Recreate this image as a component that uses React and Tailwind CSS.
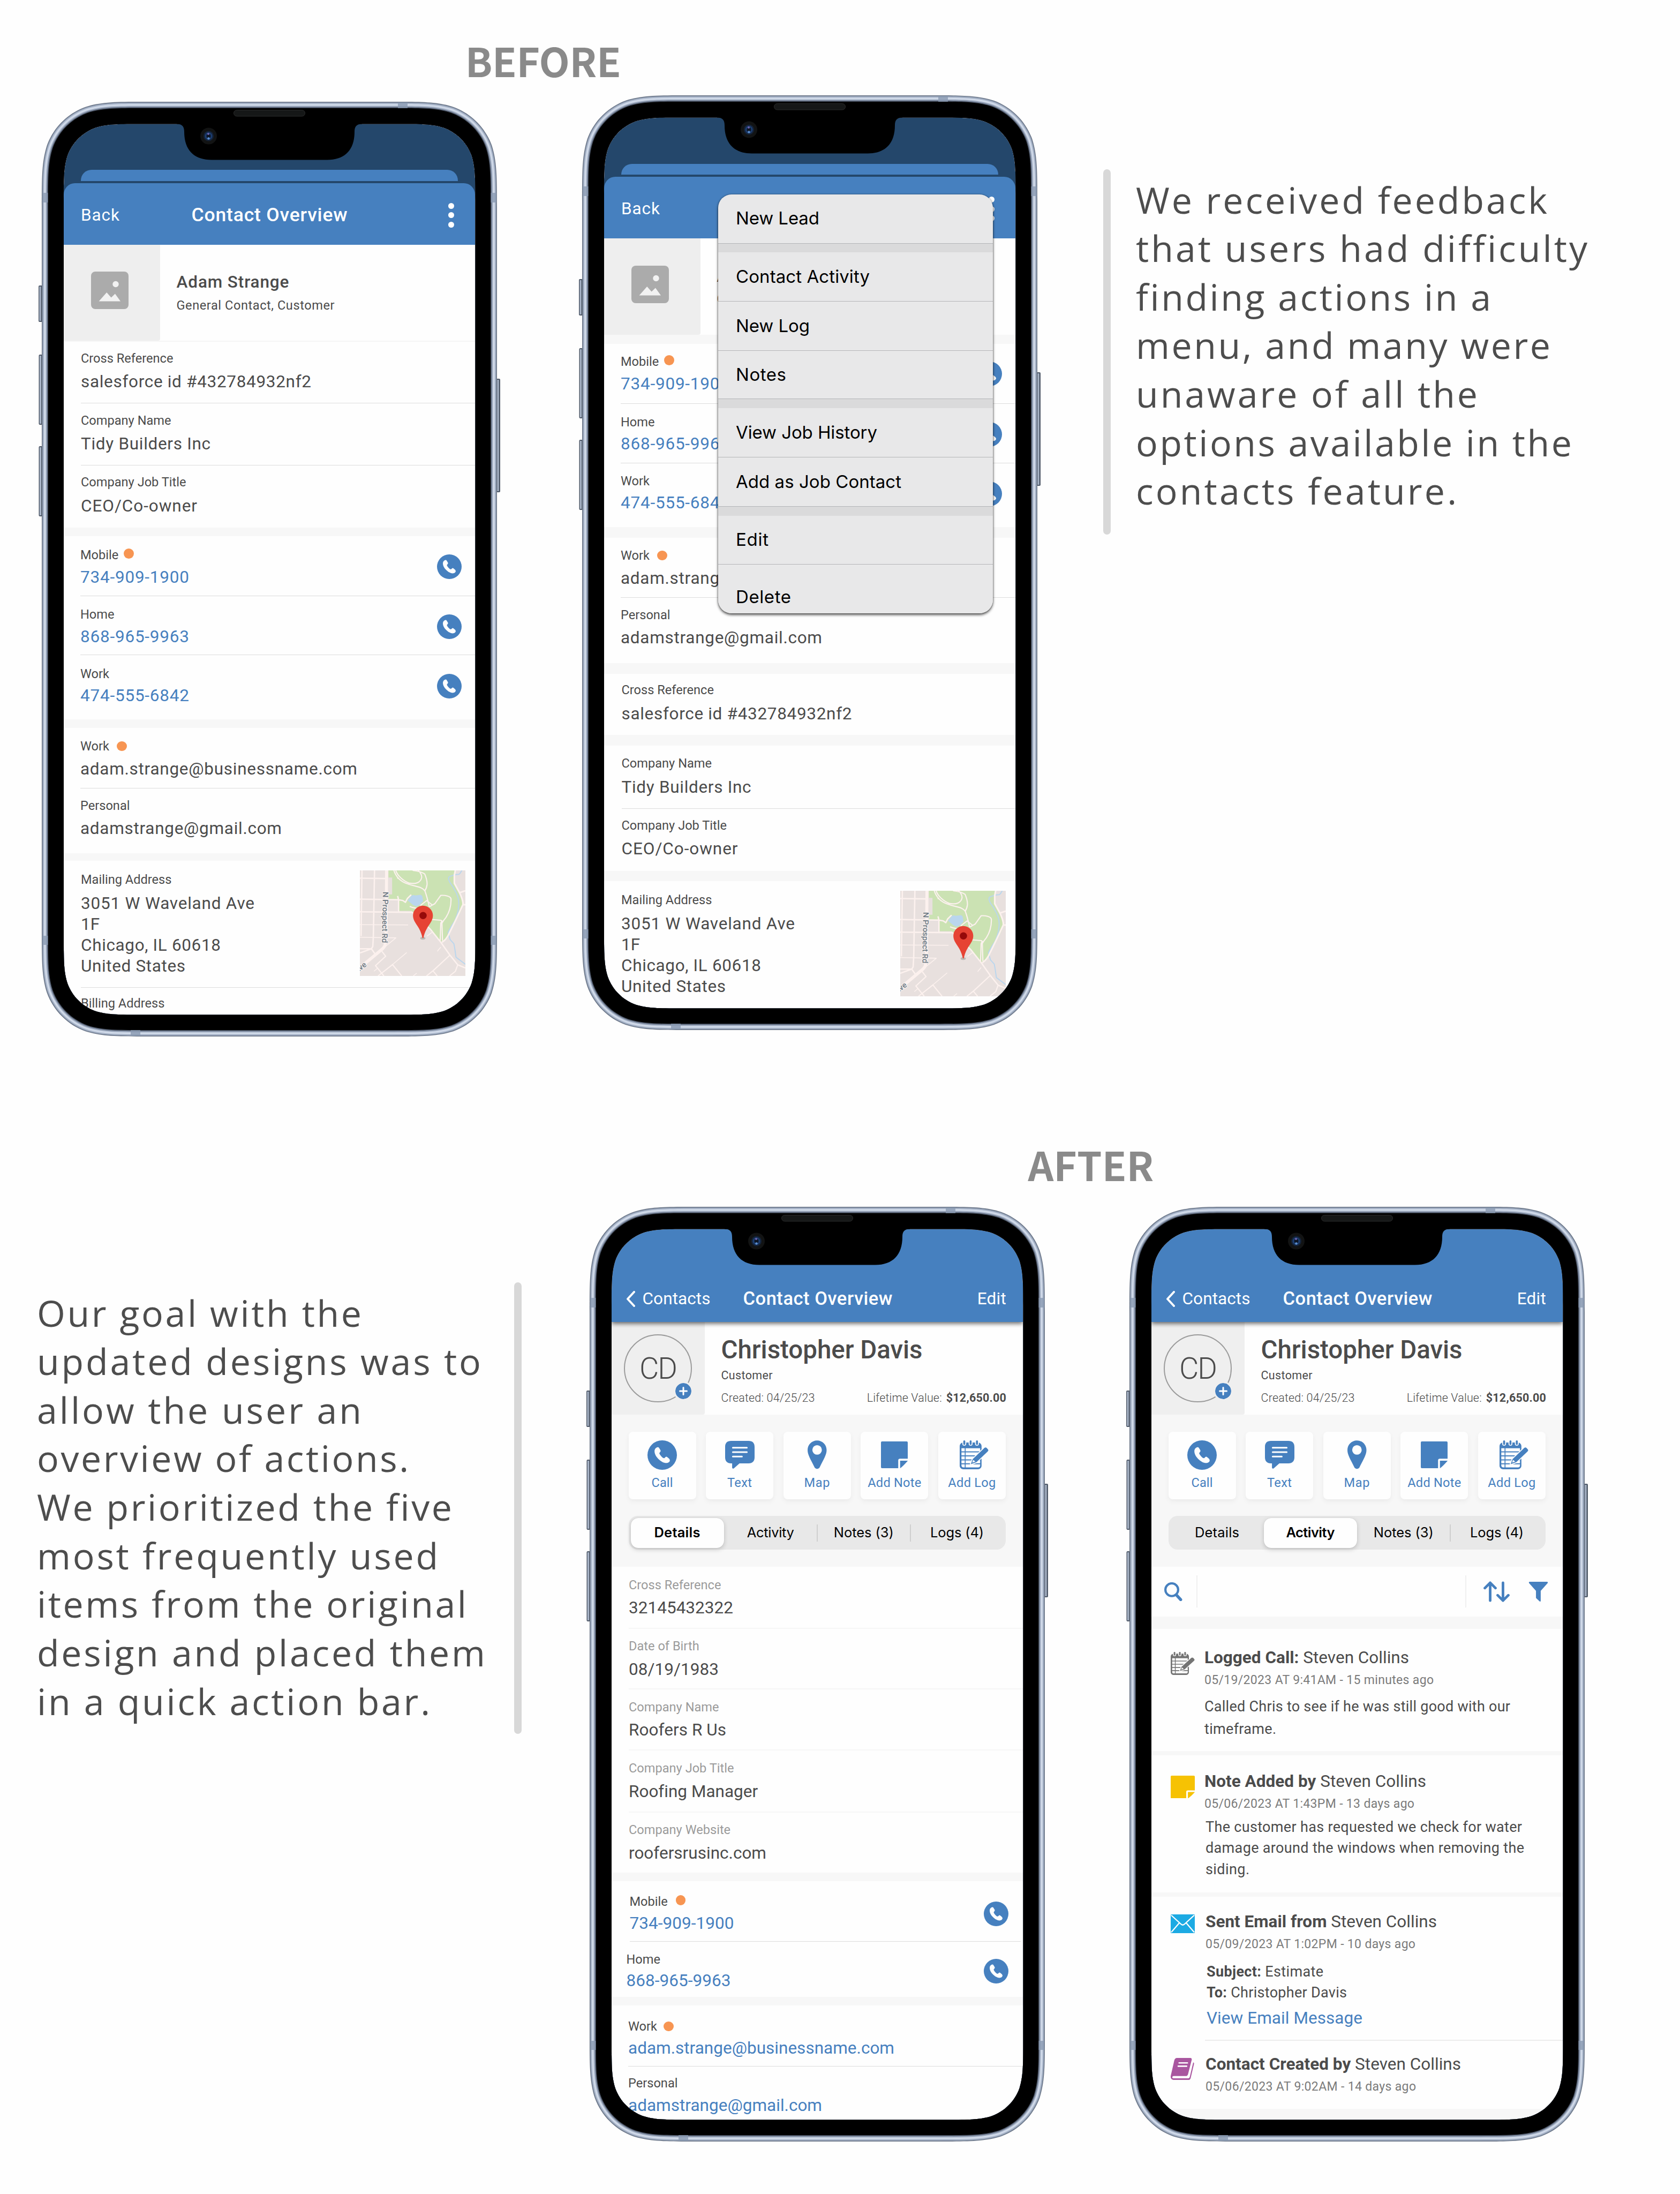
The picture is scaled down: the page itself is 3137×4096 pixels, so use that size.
import React, { useLayoutEffect, useRef, useState } from "react";

/* ---------- text helpers ---------- */

// Spaces its letters so that the line spans `w` pixels.
function Fit({ w, className = "", children }) {
  const ref = useRef(null);
  const [spacing, setSpacing] = useState(0);
  useLayoutEffect(() => {
    const el = ref.current;
    el.style.letterSpacing = "0px";
    const natural = el.getBoundingClientRect().width;
    const next = (w - natural) / Math.max(1, el.textContent.length - 1);
    el.style.letterSpacing = `${next}px`;
    setSpacing(next);
  }, [w]);
  return (
    <span ref={ref} className={`inline-block whitespace-nowrap ${className}`} style={{ letterSpacing: `${spacing}px` }}>
      {children}
    </span>
  );
}

/* ---------- device frame ---------- */

function squircle(x, y, w, h, r) {
  const a = 1.528665 * r, b = 1.08849296 * r, c = 0.86840694 * r, d = 0.63149379 * r, e = 0.07491139 * r, f = 0.37282383 * r, g = 0.16905956 * r;
  const R = x + w, B = y + h;
  return [
    `M${x + a} ${y}H${R - a}`,
    `C${R - b} ${y} ${R - c} ${y} ${R - d} ${y + e}`,
    `C${R - f} ${y + g} ${R - g} ${y + f} ${R - e} ${y + d}`,
    `C${R} ${y + c} ${R} ${y + b} ${R} ${y + a}V${B - a}`,
    `C${R} ${B - b} ${R} ${B - c} ${R - e} ${B - d}`,
    `C${R - g} ${B - f} ${R - f} ${B - g} ${R - d} ${B - e}`,
    `C${R - c} ${B} ${R - b} ${B} ${R - a} ${B}H${x + a}`,
    `C${x + b} ${B} ${x + c} ${B} ${x + d} ${B - e}`,
    `C${x + f} ${B - g} ${x + g} ${B - f} ${x + e} ${B - d}`,
    `C${x} ${B - c} ${x} ${B - b} ${x} ${B - a}V${y + a}`,
    `C${x} ${y + b} ${x} ${y + c} ${x + e} ${y + d}`,
    `C${x + g} ${y + f} ${x + f} ${y + g} ${x + d} ${y + e}`,
    `C${x + c} ${y} ${x + b} ${y} ${x + a} ${y}Z`,
  ].join("");
}

const SCREEN = squircle(41, 41.5, 768.5, 1663, 93);
const ring = (i) => `${squircle(i, i, 850 - 2 * i, 1745 - 2 * i, 129 - i)}${SCREEN}`;
const METAL = [
  [0, "#646f80"],
  [1.2, "#8e9bb0"],
  [2.6, "#aab7cb"],
  [4, "#c6d0e1"],
  [5.2, "#d6dfed"],
  [6.8, "#bcc7d9"],
  [8.2, "#95a2b7"],
  [9.6, "#717d92"],
  [10.8, "#3d4553"],
  [12, "#000000"],
];

function Bezel() {
  return (
    <svg viewBox="0 0 850 1745" className="pointer-events-none absolute inset-0 h-full w-full overflow-visible">
      {[[-6, 343, 68], [-5.5, 472, 131], [-5.5, 643, 131]].map(([x, y, h]) => (
        <g key={y}>
          <rect x={x} y={y} width="8" height={h} rx="2" fill="#4f5968" />
          <rect x={x + 1.5} y={y + 2} width="3" height={h - 4} fill="#a9b5c8" />
        </g>
      ))}
      <rect x="848" y="517" width="8" height="212" rx="2" fill="#4f5968" />
      <rect x="850.5" y="519" width="3" height="208" fill="#a9b5c8" />
      {METAL.map(([i, c]) => (
        <path key={i} d={ring(i)} fill={c} fillRule="evenodd" />
      ))}
      <g fill="#8a9ab1" opacity="0.8">
        <rect x="665" y="1" width="18" height="11" />
        <rect x="166" y="1733" width="18" height="11" />
        <rect x="1" y="170" width="10.5" height="18" />
        <rect x="838.5" y="170" width="10.5" height="18" />
        <rect x="1" y="1557" width="10.5" height="17" />
        <rect x="838.5" y="1557" width="10.5" height="17" />
      </g>
      <path d="M252 41V41.5C262 41.5 266 46 266 56C266 90 284 108.500 317 108.500H533C566 108.500 584 90 584 56C584 46 588 41.500 598 41.500V30H252Z" fill="#000" />
      <rect x="358.500" y="15.500" width="133" height="11.500" rx="5.750" fill="#151717" stroke="#2b2c2c" strokeWidth="1" />
      <circle cx="311.500" cy="64" r="15.500" fill="#121313" />
      <circle cx="311.500" cy="64" r="9.500" fill="#14233a" />
      <circle cx="311.500" cy="64" r="7" fill="#1c3d70" />
      <circle cx="311.500" cy="64" r="4" fill="#0c1626" />
      <circle cx="311" cy="60" r="2" fill="#6d62ad" />
      <circle cx="311.500" cy="68.500" r="2.200" fill="#5a8ccc" />
    </svg>
  );
}

function Phone({ className = "", screenClass = "bg-[#fefefe]", children }) {
  return (
    <div className={`relative h-[1745px] w-[850px] shrink-0 pl-[41px] pt-[41.5px] ${className}`}>
      <div className={`relative isolate flex h-[1663px] w-[768.5px] flex-col overflow-hidden rounded-[88px] ${screenClass}`}>{children}</div>
      <Bezel />
    </div>
  );
}

/* ---------- icons ---------- */

function PhoneIcon({ className }) {
  return (
    <svg viewBox="0 0 100 100" className={className}>
      <circle cx="50" cy="50" r="50" fill="#4680bf" />
      <path
        fill="#fefefe"
        d="M35 23C28 24 24 30 24 37C24 48 31 57 37 63C45 71 55 77 64 77C70 77 76 73 76 68C76 66 75 64 73 62L67 57C65 55 63 55 61 57L58 60C56 61 54 60 52 59C47 55 43 50 41 46C40 44 40 43 42 41L44 38C45 36 45 35 44 33L39 25C38 24 37 23 35 23Z"
      />
    </svg>
  );
}

function ChatIcon() {
  return (
    <svg viewBox="0 0 84 80" className="h-[52.500px] w-[55px]">
      <path fill="#4680bf" d="M17 0H67C78 0 84 6 84 17V47C84 58 78 64 67 64H41L25 78C23 80 20 79 20 76V64H17C6 64 0 58 0 47V17C0 6 6 0 17 0Z" />
      <g stroke="#fefefe" strokeWidth="4.600" strokeLinecap="round">
        <path d="M22 19.300H62M22 31.800H62M22 44.500H48" />
      </g>
    </svg>
  );
}

function PinIcon() {
  return (
    <svg viewBox="0 0 54 81" className="h-[53.500px] w-[35.500px]">
      <path
        fill="#4680bf"
        fillRule="evenodd"
        d="M27 0C42 0 54 12 54 27C54 41 46 52 34 77C31 82 23 82 20 77C8 52 0 41 0 27C0 12 12 0 27 0ZM27 13.500A13.500 13.500 0 1 0 27 40.500A13.500 13.500 0 1 0 27 13.500Z"
      />
    </svg>
  );
}

function NoteIcon({ className, color }) {
  return (
    <svg viewBox="0 0 76 76" className={className} preserveAspectRatio="none">
      <path fill={color} d="M3 0H73Q76 0 76 3V49H54Q49 49 49 54V76H3Q0 76 0 73V3Q0 0 3 0Z" />
      <path fill={color} d="M54.300 54.700H76C74 58 60 73 54.300 76Z" />
    </svg>
  );
}

function LogIcon({ className, color }) {
  return (
    <svg viewBox="0 0 82 82" className={className} preserveAspectRatio="none">
      <rect x="0" y="6" width="62" height="76" rx="10" fill={color} />
      <g fill="#fefefe">
        <path d="M5 22.500H58V31H5ZM5 34H58V42.500H5ZM5 45.500H58V54H5ZM5 57H58V65H5ZM5 68H58V71Q58 76.500 52 76.500H11Q5 76.500 5 71Z" />
        <rect x="7.500" y="0" width="11" height="15" rx="5.500" />
        <rect x="25.500" y="0" width="11" height="15" rx="5.500" />
        <rect x="43.500" y="0" width="11" height="15" rx="5.500" />
      </g>
      <g fill={color}>
        <rect x="14.300" y="20" width="2.600" height="58" />
        <rect x="10.200" y="0" width="5.600" height="13" rx="2.800" />
        <rect x="28.200" y="0" width="5.600" height="13" rx="2.800" />
        <rect x="46.200" y="0" width="5.600" height="13" rx="2.800" />
      </g>
      <path
        d="M31.500 67.500L37 53L70 21.500Q73.500 18.500 76.500 21.500L80 25.500Q82.500 28.500 79.500 31.500L47.500 62Z"
        fill={color}
        stroke="#fefefe"
        strokeWidth="5"
        paintOrder="stroke"
        strokeLinejoin="round"
      />
      <path d="M35.500 63L38.500 55.500L44.500 60.500Z" fill="#fefefe" />
    </svg>
  );
}

function MapThumb({ className }) {
  return (
    <svg viewBox="0 0 900 900" className={className}>
      <rect width="900" height="900" fill="#e8e0de" />
      <path fill="#cbe2b3" d="M244 0H815L806 40V100L850 180L880 280L866 340L800 470L750 570L700 612L610 520L440 345H333V245H244V205H275V60H244Z" />
      <path fill="#bad6ee" d="M408 256L438 218L455 209L470 214L520 208L532 218L540 262L515 290L482 307L455 296Z" />
      <g fill="none" stroke="#bad6ee" strokeWidth="9" strokeLinejoin="round">
        <path d="M870 0C860 15 855 30 845 33L815 35L765 52Q755 57 757 75C765 110 790 125 805 160C840 215 846 270 843 300C840 370 820 400 810 430C790 460 770 490 752 530L770 590L802 625L810 670L820 740L900 800" />
      </g>
      <g fill="none" stroke="#fcf1ee" strokeLinejoin="round">
        <path strokeWidth="26" d="M228 0L223 560L214 640Q205 660 180 680L60 780L0 830" />
        <path strokeWidth="12" d="M18 0L10 560M125 0L115 560L110 650L98 668L0 704M0 668H98L128 710M0 66L215 69M0 245L330 250L367 257L388 272L405 240L438 207M322 218L330 250V350M0 353L445 357L600 500L690 612L770 725L835 805L900 832" />
        <path strokeWidth="7" d="M0 463L412 465M0 570L310 575M308 575L222 645M400 700L278 803M120 860L150 835M455 900L485 876M573 560L615 528M660 690L690 655" />
        <path strokeWidth="10" d="M188 690L220 732L133 812L205 900M155 900L278 803L357 900M568 900L625 855L765 725M622 855L660 900M835 805L815 860L765 900" />
        <path strokeWidth="10" d="M290 0C310 60 350 95 400 112C470 140 530 135 555 175C575 230 585 280 592 310M306 0C320 45 370 90 420 108C480 120 520 100 527 60C530 30 500 0 495 0M450 0C490 5 530 15 553 30C570 70 575 90 573 120Q570 150 553 175M515 300L570 257L620 297M592 310L640 283L690 213C730 210 770 220 777 240C780 300 760 360 735 400L712 430L700 450L705 600M700 430L690 450L685 600M610 418L690 425L705 435M425 307L450 316L490 325M320 70L330 60" />
        <path strokeWidth="14" d="M814 0L806 40V110L850 190C870 230 880 260 880 290C840 380 800 460 765 530Q740 590 700 613M850 190L900 173M880 292H900" />
      </g>
      <g fill="#6e7a84" stroke="#f6efed" strokeWidth="12" paintOrder="stroke" strokeLinejoin="round" className="font-['Roboto',sans-serif] text-[66px] font-medium">
        <text transform="translate(196 182) rotate(91)" textLength="436" lengthAdjust="spacingAndGlyphs">N Prospect Rd</text>
        <text transform="translate(-26 880) rotate(-38)">Ave</text>
      </g>
      <ellipse cx="537" cy="578" rx="22" ry="12" fill="#a9a9a4" opacity="0.700" />
      <path fill="#e64334" d="M538 300C585 300 623 338 623 385C623 430 590 460 572 495C553 530 546 555 543 575Q538 581 533 575C530 555 522 530 504 495C486 460 453 430 453 385C453 338 491 300 538 300Z" />
      <circle cx="539" cy="385" r="31" fill="#960a0a" />
    </svg>
  );
}

/* ---------- shared rows ---------- */

const INK = "text-[#4b4b4b]";

function Band({ className }) {
  return <div className={`w-full shrink-0 bg-[#f7f7f7] ${className}`} />;
}

// A captioned value with an optional dot, call button and rule under it.
function Field({ className, label, labelClass = INK, gap = "mb-[8.500px]", value, valueClass = INK, dot, call, rule = "border-b border-[#dcdcdc]", valueW }) {
  return (
    <div className={`flex shrink-0 flex-row justify-between ${rule} ${className}`}>
      <div className="-mt-[1.500px] flex flex-col">
        <div className={`flex h-[28px] items-center text-[23.6px] leading-[28px] ${gap} ${labelClass}`}>
          {label}
          {dot && <span className={`h-[18.500px] w-[18.500px] rounded-full bg-[#f79552] ${dot}`} />}
        </div>
        {value && (
          <div className={`text-[31.5px] leading-[40px] whitespace-nowrap ${valueClass}`}>
            <Fit w={valueW}>{value}</Fit>
          </div>
        )}
      </div>
      {call && <PhoneIcon className={`h-[46px] w-[46px] shrink-0 ${call}`} />}
    </div>
  );
}

function Address({ className }) {
  return (
    <div className={`ml-[32.500px] flex shrink-0 justify-between ${className}`}>
      <div className={`flex flex-col pt-[20.500px] ${INK}`}>
        <div className="mb-[11px] text-[23.6px] leading-[28px]">Mailing Address</div>
        <div className="text-[31.5px] leading-[39px] whitespace-nowrap">
          <Fit w={324}>3051 W Waveland Ave</Fit>
          <div>1F</div>
          <Fit w={261}>Chicago, IL 60618</Fit>
          <div><Fit w={195}>United States</Fit></div>
        </div>
      </div>
      <MapThumb className="mr-[18.500px] mt-[18px] h-[197px] w-[197px]" />
    </div>
  );
}

function OldHeader() {
  return (
    <>
      <div className="mx-[32.500px] mt-[86px] h-[20.500px] shrink-0 rounded-t-[20px] bg-[#4680bf]" />
      <div className="mt-[4px] flex h-[115px] shrink-0 items-center justify-between rounded-t-[21px] bg-[#4680bf] pt-[5px] pl-[32.500px] pr-[39px] text-white">
        <div className="w-[90px] text-[31.5px]"><Fit w={72}>Back</Fit></div>
        <div className="pl-[8px] text-[35.5px] font-medium"><Fit w={291}>Contact Overview</Fit></div>
        <div className="flex w-[90px] flex-col items-end gap-[6.500px]">
          <i className="h-[11px] w-[11px] rounded-full bg-white" />
          <i className="h-[11px] w-[11px] rounded-full bg-white" />
          <i className="h-[11px] w-[11px] rounded-full bg-white" />
        </div>
      </div>
    </>
  );
}

function OldIdentity() {
  return (
    <div className="flex h-[179.500px] shrink-0 bg-[#fefefe]">
      <div className="flex h-full w-[180px] items-center rounded-br-[4px] bg-[#eeeeee] pl-[51px] pb-[8px]">
        <svg viewBox="0 0 70 70" className="h-[70px] w-[70px]">
          <rect width="70" height="70" rx="8" fill="#ababab" />
          <circle cx="46" cy="23.500" r="5.700" fill="#f2f2f2" />
          <path d="M14.600 55.500L29.200 39L37.600 48.500L44.900 41.400L55 55.500Z" fill="#f2f2f2" />
        </svg>
      </div>
      <div className={`flex flex-col pl-[31px] pt-[50.500px] ${INK}`}>
        <div className="text-[31.5px] leading-[40px] font-medium"><Fit w={210}>Adam Strange</Fit></div>
        <div className="mt-[8.500px] text-[23.6px] leading-[28px]"><Fit w={295}>General Contact, Customer</Fit></div>
      </div>
    </div>
  );
}

const BLUE = "text-[#4680bf]";

/* ---------- phone 1 ---------- */

function BeforeContact() {
  return (
    <Phone className="mt-[11.500px]" screenClass="bg-[#24476b]">
      <OldHeader />
      <div className="flex h-[1440px] shrink-0 flex-col bg-[#fefefe]">
        <OldIdentity />
        <div className="h-[2px] shrink-0 bg-[#f5f5f5]" />
        <Field className="ml-[32.500px] h-[115px] pt-[18px]" gap="mb-[10.500px]" label="Cross Reference" value="salesforce id #432784932nf2" valueW={430} />
        <Field className="ml-[32.500px] h-[116px] pt-[19px]" gap="mb-[10.500px]" label="Company Name" value="Tidy Builders Inc" valueW={242} />
        <Field className="ml-[32.500px] h-[116px] pt-[18.500px]" gap="mb-[10.500px]" label="Company Job Title" value="CEO/Co-owner" valueW={217} rule="" />
        <Band className="h-[15.500px]" />
        <Field className="ml-[31.500px] h-[112px] pt-[22.500px]" label="Mobile" dot="ml-[10px] mb-[4px]" value="734-909-1900" valueW={203} valueClass={BLUE} call="mr-[25.500px] mt-[12px]" />
        <Field className="ml-[31.500px] h-[110.500px] pt-[22px]" gap="mb-[7.500px]" label="Home" value="868-965-9963" valueW={203} valueClass={BLUE} call="mr-[25.500px] mt-[12px]" />
        <Field className="ml-[31.500px] h-[120px] pt-[22px]" gap="mb-[7.500px]" label="Work" value="474-555-6842" valueW={203} valueClass={BLUE} call="mr-[25.500px] mt-[13px]" rule="" />
        <Band className="h-[16px]" />
        <Field className="ml-[31.500px] h-[112.500px] pt-[21.500px]" label="Work" dot="ml-[14px]" value="adam.strange@businessname.com" valueW={517} />
        <Field className="ml-[31.500px] h-[121.500px] pt-[20px]" label="Personal" value="adamstrange@gmail.com" valueW={376} rule="" />
        <Band className="h-[14px]" />
        <Address className="h-[237px] border-b border-[#dcdcdc]" />
        <Field className="ml-[32.500px] h-[110px] pt-[16px]" label="Billing Address" rule="" />
      </div>
    </Phone>
  );
}

/* ---------- phone 2 ---------- */

function MenuItem({ className = "h-[92px] border-b-[1.500px]", w, children }) {
  return (
    <div className={`flex shrink-0 items-center border-[#b4b5b8] pl-[33.500px] text-[33px] text-black ${className}`}>
      <Fit w={w}>{children}</Fit>
    </div>
  );
}

function ActionMenu() {
  return (
    <div className="absolute left-[213px] top-[143px] flex h-[782px] w-[513px] flex-col overflow-hidden rounded-[25px] bg-[#e8e8e9] font-['Inter',sans-serif]">
      <MenuItem w={156}>New Lead</MenuItem>
      <div className="h-[16.500px] shrink-0 bg-[#dadadb]" />
      <MenuItem w={250}>Contact Activity</MenuItem>
      <MenuItem w={138}>New Log</MenuItem>
      <MenuItem w={94} className="h-[90px] border-b-[1.500px]">Notes</MenuItem>
      <div className="h-[17px] shrink-0 bg-[#dadadb]" />
      <MenuItem w={264}>View Job History</MenuItem>
      <MenuItem w={309}>Add as Job Contact</MenuItem>
      <div className="h-[17px] shrink-0 bg-[#dadadb]" />
      <MenuItem w={61} className="h-[91px] border-b-[1.500px]">Edit</MenuItem>
      <MenuItem w={103} className="h-[90px] pt-[31px]">Delete</MenuItem>
    </div>
  );
}

function BeforeMenu() {
  return (
    <Phone className="ml-[159px]" screenClass="bg-[#24476b]">
      <OldHeader />
      <div className="flex h-[1440px] shrink-0 flex-col bg-[#fefefe]">
        <OldIdentity />
        <Band className="h-[17px]" />
        <Field className="ml-[31.500px] h-[112.500px] pt-[20.500px]" label="Mobile" dot="ml-[10px] mb-[4px]" value="734-909-1900" valueW={203} valueClass={BLUE} call="mr-[25.500px] mt-[13px]" />
        <Field className="ml-[31.500px] h-[110.500px] pt-[21px]" gap="mb-[7px]" label="Home" value="868-965-9963" valueW={203} valueClass={BLUE} call="mr-[25.500px] mt-[13px]" />
        <Field className="ml-[31.500px] h-[119px] pt-[20.500px]" gap="mb-[7.500px]" label="Work" value="474-555-6842" valueW={203} valueClass={BLUE} call="mr-[25.500px] mt-[14px]" rule="" />
        <Band className="h-[20px]" />
        <Field className="ml-[31.500px] h-[112.500px] pt-[21px]" gap="mb-[9px]" label="Work" dot="ml-[14px]" value="adam.strange@businessname.com" valueW={517} />
        <Field className="ml-[31.500px] h-[122px] pt-[19px]" gap="mb-[9px]" label="Personal" value="adamstrange@gmail.com" valueW={376} rule="" />
        <Band className="h-[20px]" />
        <Field className="ml-[33px] h-[113.500px] pt-[17.500px]" gap="mb-[10.500px]" label="Cross Reference" value="salesforce id #432784932nf2" valueW={430} rule="" />
        <Band className="h-[20px]" />
        <Field className="ml-[33px] h-[118px] pt-[21px]" gap="mb-[10.500px]" label="Company Name" value="Tidy Builders Inc" valueW={242} />
        <Field className="ml-[33px] h-[116px] pt-[18.500px]" gap="mb-[10px]" label="Company Job Title" value="CEO/Co-owner" valueW={217} rule="" />
        <Band className="h-[19.500px]" />
        <Address className="h-[237px]" />
      </div>
      <div className="absolute left-[213px] top-[143px] h-[782px] w-[513px] rounded-[25px] shadow-[0_3px_5px_rgba(0,0,0,0.65),0_0_3px_rgba(0,0,0,0.4)]" />
      <ActionMenu />
    </Phone>
  );
}

/* ---------- phones 3 and 4 ---------- */

function Chrome() {
  return (
    <div className="relative z-10 flex h-[174px] shrink-0 items-end justify-between bg-[#4680bf] pb-[23px] pl-[27px] pr-[31px] text-[31.5px] leading-[40px] text-white shadow-[0_3px_8px_rgba(0,0,0,0.6)]">
      <div className="flex w-[190px] items-center gap-[14px]">
        <svg viewBox="0 0 17 30" className="h-[30px] w-[17px]">
          <path d="M15 2L3 15L15 28" fill="none" stroke="#fff" strokeWidth="4" strokeLinecap="round" strokeLinejoin="round" />
        </svg>
        <Fit w={127}>Contacts</Fit>
      </div>
      <div className="mb-[1px] pl-[7px] text-[34.5px] font-medium"><Fit w={279}>Contact Overview</Fit></div>
      <div className="w-[190px] text-right"><Fit w={54}>Edit</Fit></div>
    </div>
  );
}

function Identity() {
  return (
    <div className="flex h-[173px] shrink-0 bg-[#fefefe]">
      <div className="flex h-full w-[174px] shrink-0 items-center justify-center rounded-br-[4px] bg-[#efefef]">
        <div className="relative flex h-[127px] w-[127px] items-center justify-center rounded-full border-[2px] border-[#9b9b9b]">
          <span className={`font-light text-[56px] ${INK}`}><Fit w={71}>CD</Fit></span>
          <div className="absolute right-[-1px] bottom-[4px] h-[30px] w-[30px] rounded-full bg-[#4680bf] outline-[3px] outline-[#efefef]">
            <svg viewBox="0 0 30 30" className="h-full w-full">
              <path d="M15 8.500V21.500M8.500 15H21.500" stroke="#fff" strokeWidth="3" strokeLinecap="round" />
            </svg>
          </div>
        </div>
      </div>
      <div className="flex flex-1 flex-col pl-[31px] pr-[31px] pt-[22px] text-[#4b4b4b]">
        <div className="text-[47.5px] leading-[60px] font-medium"><Fit w={376}>Christopher Davis</Fit></div>
        <div className="mt-[5px] text-[21.500px] leading-[26px]"><Fit w={96}>Customer</Fit></div>
        <div className="mt-[15.500px] flex justify-between text-[21.500px] leading-[26px] font-light">
          <Fit w={175}>Created: 04/25/23</Fit>
          <div className="flex gap-[8px]">
            <Fit w={140}>Lifetime Value:</Fit>
            <Fit w={112} className="font-bold">$12,650.00</Fit>
          </div>
        </div>
      </div>
    </div>
  );
}

function Action({ icon, label, w }) {
  return (
    <div className="flex h-[126px] w-[126px] flex-col items-center rounded-[8px] bg-[#fefefe] pt-[14.500px] shadow-[0_4px_10px_rgba(0,0,0,0.05)]">
      <div className="flex h-[58px] items-center justify-center">{icon}</div>
      <div className={`mt-[8.500px] text-[23.6px] leading-[28px] ${BLUE}`}><Fit w={w}>{label}</Fit></div>
    </div>
  );
}

const TABS = [["Details", 83], ["Activity", 88], ["Notes (3)", 112], ["Logs (4)", 100]];

function Toolbar({ active }) {
  return (
    <div className="flex h-[284px] shrink-0 flex-col bg-[#f7f7f7] px-[32px] pt-[31.500px]">
      <div className="flex justify-between">
        <Action icon={<PhoneIcon className="h-[55px] w-[55px]" />} label="Call" w={40} />
        <Action icon={<ChatIcon />} label="Text" w={46} />
        <Action icon={<PinIcon />} label="Map" w={48} />
        <Action icon={<NoteIcon className="h-[50px] w-[50px]" color="#4680bf" />} label="Add Note" w={100} />
        <Action icon={<div className="pl-[8px]"><LogIcon className="h-[54px] w-[54px]" color="#4680bf" /></div>} label="Add Log" w={89} />
      </div>
      <div className="mt-[31.500px] flex h-[63px] items-center rounded-[17px] bg-[#e8e8e8] px-[4px] font-['Inter',sans-serif] text-[25.500px] text-black">
        {TABS.map(([name, w], i) => {
          const on = i === active;
          const bar = i > 0 && !on && i !== active + 1;
          return (
            <div
              key={name}
              className={`relative flex h-[56px] flex-1 items-center justify-center ${on ? "rounded-[14px] bg-[#fefefe] font-semibold shadow-[0_3px_8px_rgba(0,0,0,0.18),0_0_1px_rgba(0,0,0,0.2)]" : ""}`}
            >
              {bar && <span className="absolute left-[-1px] top-[12px] h-[32px] w-[2px] bg-[#cfcfcf]" />}
              <Fit w={on ? w + 3 : w}>{name}</Fit>
            </div>
          );
        })}
      </div>
    </div>
  );
}

function AfterDetails() {
  const soft = "border-b-[2px] border-[#f6f6f6]";
  const gray = "text-[#9b9b9b]";
  const gap = "mb-[9.500px]";
  return (
    <Phone className="ml-[126.500px]">
      <Chrome />
      <Identity />
      <Toolbar active={0} />
      <Field className="ml-[32.500px] h-[115.500px] pt-[21px]" gap={gap} label="Cross Reference" labelClass={gray} value="32145432322" valueW={195} rule={soft} />
      <Field className="ml-[32.500px] h-[113px] pt-[20px]" gap={gap} label="Date of Birth" labelClass={gray} value="08/19/1983" valueW={168} rule={soft} />
      <Field className="ml-[32.500px] h-[114.500px] pt-[20.500px]" gap={gap} label="Company Name" labelClass={gray} value="Roofers R Us" valueW={182} rule={soft} />
      <Field className="ml-[32.500px] h-[116px] pt-[20.500px]" gap={gap} label="Company Job Title" labelClass={gray} value="Roofing Manager" valueW={240} rule={soft} />
      <Field className="ml-[32.500px] h-[112px] pt-[19.500px]" gap={gap} label="Company Website" labelClass={gray} value="roofersrusinc.com" valueW={257} rule="" />
      <Band className="h-[16px]" />
      <Field className="ml-[34px] mr-[4px] h-[113px] pt-[25px]" label="Mobile" dot="ml-[15px] mb-[4px]" value="734-909-1900" valueW={195} valueClass={`${BLUE} mt-[-1px]`} call="mr-[23px] mt-[12.500px]" />
      <Field className="ml-[28px] mr-[4px] h-[103px] pt-[20px]" label="Home" value="868-965-9963" valueW={195} valueClass={`${BLUE} mt-[-2.500px]`} call="mr-[23px] mt-[12px]" rule="" />
      <Band className="h-[16px]" />
      <Field className="ml-[31.500px] h-[113.500px] pt-[26.500px]" gap="mb-[7.500px]" label="Work" dot="ml-[12px]" value="adam.strange@businessname.com" valueW={497} valueClass={`${BLUE} mt-[-1px]`} />
      <Field className="ml-[31.500px] h-[120px] pt-[19px]" gap="mb-[7.500px]" label="Personal" value="adamstrange@gmail.com" valueW={362} valueClass={BLUE} rule="" />
    </Phone>
  );
}

function Entry({ className, icon, bold, titleW, date, dateW, children }) {
  return (
    <div className={`flex shrink-0 items-start bg-[#fefefe] ${className}`}>
      <div className="w-[63px] shrink-0">{icon}</div>
      <div className="flex flex-col">
        <div className={`text-[31.5px] leading-[40px] ${INK}`}>
          <Fit w={titleW}>
            <b className="font-bold">{bold}</b> Steven Collins
          </Fit>
        </div>
        <div className="mt-[4px] text-[23px] leading-[36px] text-[#7b7b7b]"><Fit w={dateW}>{date}</Fit></div>
        {children}
      </div>
    </div>
  );
}

function AfterActivity() {
  return (
    <Phone className="ml-[158px]">
      <Chrome />
      <Identity />
      <Toolbar active={1} />
      <div className="flex h-[92.500px] shrink-0 items-center bg-[#fefefe] pl-[23px] pr-[27px]">
        <svg viewBox="0 0 61 64" className="h-[35.500px] w-[35px]">
          <circle cx="26" cy="25" r="21.500" fill="none" stroke="#4680bf" strokeWidth="7.500" />
          <path d="M42 43L56 58.500" stroke="#4680bf" strokeWidth="10" strokeLinecap="round" />
        </svg>
        <div className="ml-[26px] h-[60px] w-[504px] border-x-[2px] border-[#f0f0f0]" />
        <svg viewBox="0 0 86 70" className="ml-[32px] h-[39px] w-[49px]" preserveAspectRatio="none" fill="none" stroke="#4680bf" strokeWidth="8.500" strokeLinecap="round" strokeLinejoin="round">
          <path d="M22 65V5M4.500 23L22 5L39.500 23M64 5V65M46.500 47L64 65L81.500 47" />
        </svg>
        <svg viewBox="0 0 64 67" className="ml-auto h-[37px] w-[37px]">
          <path fill="#4680bf" d="M3 0H61C64 0 65 3 63 5L40 31V64C40 67 38 68 36 66L24 55V31L1 5C-1 3 0 0 3 0Z" />
        </svg>
      </div>
      <Band className="h-[23px]" />
      <Entry
        className="h-[228.500px] rounded-[5px] pl-[36.500px] pt-[34.500px]"
        icon={<LogIcon className="mt-[8.500px] h-[43px] w-[45px]" color="#747474" />}
        bold="Logged Call:" titleW={382} date="05/19/2023 AT 9:41AM - 15 minutes ago" dateW={428}
      >
        <div className={`mt-[11px] flex flex-col items-start text-[27px] leading-[41.500px] ${INK}`}>
          <Fit w={571}>Called Chris to see if he was still good with our</Fit>
          <Fit w={134}>timeframe.</Fit>
        </div>
      </Entry>
      <Band className="h-[8px]" />
      <Entry
        className="h-[255.500px] rounded-[5px] pl-[36.500px] pt-[28.500px]"
        icon={<NoteIcon className="mt-[9px] h-[42.500px] w-[45px]" color="#f6c203" />}
        bold="Note Added by" titleW={414} date="05/06/2023 AT 1:43PM - 13 days ago" dateW={392}
      >
        <div className={`mt-[6.500px] flex flex-col items-start pl-[2px] text-[27px] leading-[39.400px] ${INK}`}>
          <Fit w={591}>The customer has requested we check for water</Fit>
          <Fit w={595}>damage around the windows when removing the</Fit>
          <Fit w={82}>siding.</Fit>
        </div>
      </Entry>
      <Band className="h-[8px]" />
      <Entry
        className="h-[267px] rounded-[5px] pl-[38.500px] pt-[27px]"
        icon={
          <svg viewBox="0 0 90 70" className="mt-[6px] ml-[-2px] h-[35px] w-[45px]">
            <rect width="90" height="70" rx="3" fill="#1caae3" />
            <path d="M2 3L38 36Q45 43 52 36L88 3M2 67L32 32M88 67L58 32" fill="none" stroke="#fefefe" strokeWidth="4.500" />
          </svg>
        }
        bold="Sent Email from" titleW={432} date="05/09/2023 AT 1:02PM - 10 days ago" dateW={392}
      >
        <div className={`mt-[14px] flex flex-col items-start pl-[2px] text-[27px] leading-[39.500px] ${INK}`}>
          <Fit w={218}><b className="font-bold">Subject:</b> Estimate</Fit>
          <Fit w={262}><b className="font-bold">To:</b> Christopher Davis</Fit>
          <Fit w={291} className={`mt-[7px] text-[31.5px] ${BLUE}`}>View Email Message</Fit>
        </div>
      </Entry>
      <div className="ml-[100px] h-[2px] shrink-0 bg-[#ececec]" />
      <Entry
        className="h-[127px] pl-[38.500px] pt-[24px]"
        icon={
          <svg viewBox="0 0 90 80" className="mt-[8px] ml-[-2px] h-[41px] w-[44px]" preserveAspectRatio="none">
            <path fill="#a9569f" d="M24 0H76Q82 1 80 8L66 60Q64 66 58 66H12Q6 66 6 71Q7 74 11 74H68Q72 73 73 69L86 16Q90 17 89 22L76 74Q74 80 68 80H10Q-1 78 0 66L14 8Q17 0 24 0Z" />
            <path d="M32 18H64M28.500 30H61" stroke="#fefefe" strokeWidth="5" strokeLinecap="round" />
          </svg>
        }
        bold="Contact Created by" titleW={477} date="05/06/2023 AT 9:02AM - 14 days ago" dateW={393}
      />
      <div className="flex-1 bg-[#f7f7f7]" />
    </Phone>
  );
}

/* ---------- page ---------- */

const FEEDBACK = [
  ["We received feedback", 768],
  ["that users had difficulty", 843],
  ["finding actions in a", 663],
  ["menu, and many were", 774],
  ["unaware of all the", 638],
  ["options available in the", 814],
  ["contacts feature.", 599],
];

const GOAL = [
  ["Our goal with the", 606],
  ["updated designs was to", 829],
  ["allow the user an", 606],
  ["overview of actions.", 694],
  ["We prioritized the five", 775],
  ["most frequently used", 749],
  ["items from the original", 802],
  ["design and placed them", 837],
  ["in a quick action bar.", 734],
];

function Prose({ lines, className }) {
  return (
    <p className={`flex flex-col items-start font-['Open_Sans',sans-serif] text-[68px] leading-[90.650px] text-[#4d4d4d] ${className}`}>
      {lines.map(([t, w]) => (
        <Fit key={t} w={w}>{t}</Fit>
      ))}
    </p>
  );
}

const TITLE = "h-[100px] w-[600px] text-center font-['Noto_Sans_CJK_SC',sans-serif] text-[74.5px] leading-[100px] font-bold text-[#8a8a8a]";

export default function App() {
  return (
    <main className="h-[4096px] w-[3137px] overflow-hidden bg-[#fefefe] font-['Roboto',sans-serif]">
      <section className="h-[2123px] pt-[62px]">
        <h2 className={`ml-[714px] ${TITLE}`}><Fit w={291}>BEFORE</Fit></h2>
        <div className="mt-[16px] flex items-start pl-[77.500px]">
          <BeforeContact />
          <BeforeMenu />
          <div className="ml-[123.500px] mt-[137.500px] flex h-[682px]">
            <div className="w-[14px] shrink-0 rounded-full bg-[#d8d8d8]" />
            <Prose lines={FEEDBACK} className="pl-[47px] pt-[12px]" />
          </div>
        </div>
      </section>
      <section>
        <h2 className={`ml-[1737px] ${TITLE}`}><Fit w={235}>AFTER</Fit></h2>
        <div className="mt-[29.500px] flex items-start pl-[69px]">
          <div className="mt-[141.500px] flex h-[843px] w-[905px] justify-between">
            <Prose lines={GOAL} className="pt-[11.500px]" />
            <div className="w-[14px] shrink-0 rounded-full bg-[#d8d8d8]" />
          </div>
          <AfterDetails />
          <AfterActivity />
        </div>
      </section>
    </main>
  );
}
